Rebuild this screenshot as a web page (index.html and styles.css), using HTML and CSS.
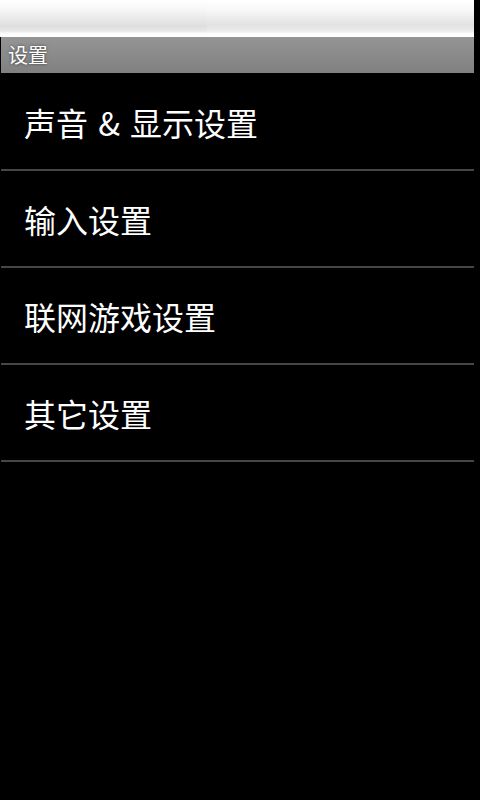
FILE: index.html
```html
<!DOCTYPE html>
<html lang="zh-CN">
<head>
<meta charset="utf-8">
<title>设置</title>
<link rel="stylesheet" href="styles.css">
</head>
<body>
<div class="screen">
  <div class="statusbar">
    <div class="status-left"></div>
    <div class="status-right"></div>
  </div>
  <div class="titlebar"><span class="title">设置</span></div>
  <ul class="list">
    <li class="item">声音 &amp; 显示设置</li>
    <li class="item">输入设置</li>
    <li class="item">联网游戏设置</li>
    <li class="item">其它设置</li>
  </ul>
</div>
</body>
</html>
```
FILE: styles.css
```css
html, body {
  margin: 0;
  padding: 0;
  background: #000;
}
body {
  width: 480px;
  height: 800px;
  overflow: hidden;
  font-family: "Noto Sans CJK SC", "Noto Sans", sans-serif;
}
.screen {
  width: 474px;
}
.statusbar {
  display: flex;
  height: 37px;
}
.status-left {
  width: 207px;
  background: linear-gradient(#ffffff 0px, #f6f6f6 10px, #dedede 26px, #e8e8e8 31px, #ffffff 34px, #ffffff 37px);
}
.status-right {
  flex: 1;
  background: linear-gradient(#ffffff 0px, #f8f8f8 10px, #e2e2e2 25px, #ececec 31px, #ffffff 34px, #ffffff 37px);
}
.titlebar {
  height: 36px;
  margin-left: 1px;
  background: linear-gradient(#959595, #808080);
  display: flex;
  align-items: center;
  padding-left: 7px;
}
.title {
  color: #fff;
  font-size: 20px;
  line-height: 24px;
  text-shadow: 0 0 3px rgba(0, 0, 0, 0.6);
}
.list {
  list-style: none;
  margin: 1px 0 0 0;
  padding: 0;
}
.item {
  height: 95px;
  margin-left: 1px;
  border-bottom: 2px solid #464646;
  display: flex;
  align-items: center;
  padding-left: 23px;
  color: #fff;
  font-size: 32px;
  word-spacing: 3px;
}
```
